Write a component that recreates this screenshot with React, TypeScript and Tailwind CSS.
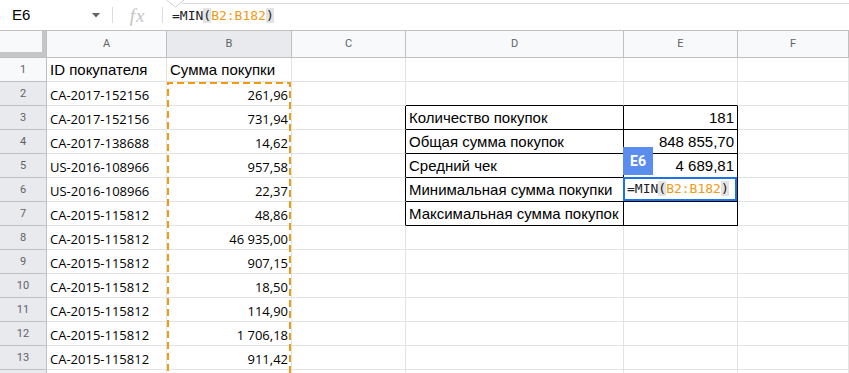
import { ReactNode } from 'react'

const rows: { a: string, b: string, d?: string, e?: string }[] = [
  { a: 'ID покупателя', b: 'Сумма покупки' },
  { a: 'CA-2017-152156', b: '261,96' },
  { a: 'CA-2017-152156', b: '731,94', d: 'Количество покупок', e: '181' },
  { a: 'CA-2017-138688', b: '14,62', d: 'Общая сумма покупок', e: '848 855,70' },
  { a: 'US-2016-108966', b: '957,58', d: 'Средний чек', e: '4 689,81' },
  { a: 'US-2016-108966', b: '22,37', d: 'Минимальная сумма покупки' },
  { a: 'CA-2015-115812', b: '48,86', d: 'Максимальная сумма покупок' },
  { a: 'CA-2015-115812', b: '46 935,00' },
  { a: 'CA-2015-115812', b: '907,15' },
  { a: 'CA-2015-115812', b: '18,50' },
  { a: 'CA-2015-115812', b: '114,90' },
  { a: 'CA-2015-115812', b: '1 706,18' },
  { a: 'CA-2015-115812', b: '911,42' },
  { a: '', b: '' },
]

const cols = [
  { key: 'A', w: 'w-[120px]' },
  { key: 'B', w: 'w-[125px]' },
  { key: 'C', w: 'w-[114px]' },
  { key: 'D', w: 'w-[218px]' },
  { key: 'E', w: 'w-[114px]' },
  { key: 'F', w: 'flex-1 min-w-0' },
]

function Formula () {
  return (
    <span className="font-['DejaVu_Sans_Mono',monospace] text-[13px] text-[#202124] whitespace-nowrap">
      =MIN<span className="bg-[#e3e3e3]">(</span>
      <span className="text-[#f09b12]">B2:B182</span>
      <span className="bg-[#e3e3e3]">)</span>
    </span>
  )
}

function Cell ({ w, right, bottom, children, className = '' }: {
  w: string
  right?: boolean
  bottom?: boolean
  children?: ReactNode
  className?: string
}) {
  return (
    <div
      className={[
        w,
        'h-full border-r border-b flex items-end px-[3px] overflow-visible whitespace-nowrap',
        right ? 'border-r-black' : 'border-r-[#e2e3e3]',
        bottom ? 'border-b-black' : 'border-b-[#e2e3e3]',
        className,
      ].join(' ')}
    >
      {children}
    </div>
  )
}

function Row ({ n }: { n: number }) {
  const r = rows[n - 1]
  const inTable = n >= 3 && n <= 7
  const arial = "font-['Liberation_Sans',Arial,sans-serif] text-[15px] text-black"
  const open = "font-['Open_Sans',sans-serif] text-[13px] text-black"
  return (
    <div className="flex h-[24px] shrink-0">
      <div
        className={`w-[47px] h-full border-r border-b border-[#c0c0c0] flex items-center justify-center pt-[2px] font-['Roboto',sans-serif] text-[11px] text-[#5f6368] ${n === 1 ? 'bg-[#f8f9fa]' : 'bg-[#e8eaed]'}`}
      >
        {n < rows.length ? n : ''}
      </div>
      <Cell w={cols[0].w} className={n === 1 ? arial : open}>{r.a}</Cell>
      <Cell w={cols[1].w} className={`relative ${n === 1 ? arial : `${open} justify-end`}`}>
        {r.b}
        {n === 2 && (
          <svg className="absolute left-0 top-0 z-10" width="125" height="300">
            <path
              d="M1 300 V1 H123 V300"
              fill="none"
              stroke="#f29a10"
              strokeWidth="2"
              strokeDasharray="7 4"
            />
          </svg>
        )}
      </Cell>
      <Cell w={cols[2].w} right={inTable} />
      <Cell w={cols[3].w} right={inTable} bottom={n >= 2 && n <= 7} className={arial}>{r.d}</Cell>
      <Cell w={cols[4].w} right={inTable} bottom={n >= 2 && n <= 7} className={`${arial} justify-end relative`}>
        {r.e}
        {n === 6 && (
          <>
            <div className="absolute -left-px top-[-31px] w-[30px] h-[28px] bg-[#5b8def] text-white font-bold text-[14px] flex items-center justify-center font-['Roboto',sans-serif] z-20">
              E6
            </div>
            <div className="absolute -left-px -top-px right-0 bottom-0 border-2 border-[#1a73e8] bg-white flex items-center pl-[2px] z-20">
              <Formula />
            </div>
          </>
        )}
      </Cell>
      <Cell w={cols[5].w} />
    </div>
  )
}

export default function App () {
  return (
    <div className="w-[849px] h-[373px] overflow-hidden bg-white relative font-['Liberation_Sans',Arial,sans-serif]">
      {/* formula bar */}
      <div className="h-[30px] flex items-center relative">
        <svg className="absolute left-0 top-0" width="849" height="8">
          <path d="M182 3.5 H849" stroke="#dadce0" strokeWidth="1" />
          <path d="M166.5 0 L175.5 7 L184 0" stroke="#cfd1d4" strokeWidth="1" fill="white" />
        </svg>
        <div className="w-[112px] h-full flex items-center pl-3 pr-3">
          <span className="text-[15px] text-black">E6</span>
          <svg className="ml-auto" width="8" height="5" viewBox="0 0 8 5">
            <path d="M0 0 H8 L4 4.5 Z" fill="#5f6368" />
          </svg>
        </div>
        <div className="w-px h-[16px] bg-[#dadce0]" />
        <div className="w-[49px] flex items-center justify-center">
          <span className="font-['Liberation_Serif',serif] italic text-[19px] text-[#c4c4c4] leading-none tracking-[1px]">fx</span>
        </div>
        <div className="w-px h-[16px] bg-[#dadce0]" />
        <div className="pl-[9px] pt-[2px] flex items-center">
          <Formula />
        </div>
      </div>

      {/* column headers */}
      <div className="flex h-[28px] border-t border-[#c0c0c0]">
        <div className="w-[47px] h-full border-r border-b border-[#c0c0c0] flex flex-col bg-[#f8f9fa]">
          <div className="flex-1 flex">
            <div className="flex-1" />
            <div className="w-[4px] bg-[#c4c7c5]" />
          </div>
          <div className="h-[5px] bg-[#c4c7c5]" />
        </div>
        {cols.map((c) => (
          <div
            key={c.key}
            className={`${c.w} h-full border-r border-b border-[#c0c0c0] flex items-center justify-center font-['Roboto',sans-serif] text-[11px] text-[#5f6368] ${c.key === 'B' ? 'bg-[#e8eaed]' : 'bg-[#f8f9fa]'}`}
          >
            {c.key}
          </div>
        ))}
      </div>

      {/* grid rows */}
      <div className="flex flex-col">
        {rows.map((_, i) => (
          <Row key={i} n={i + 1} />
        ))}
      </div>
    </div>
  )
}
